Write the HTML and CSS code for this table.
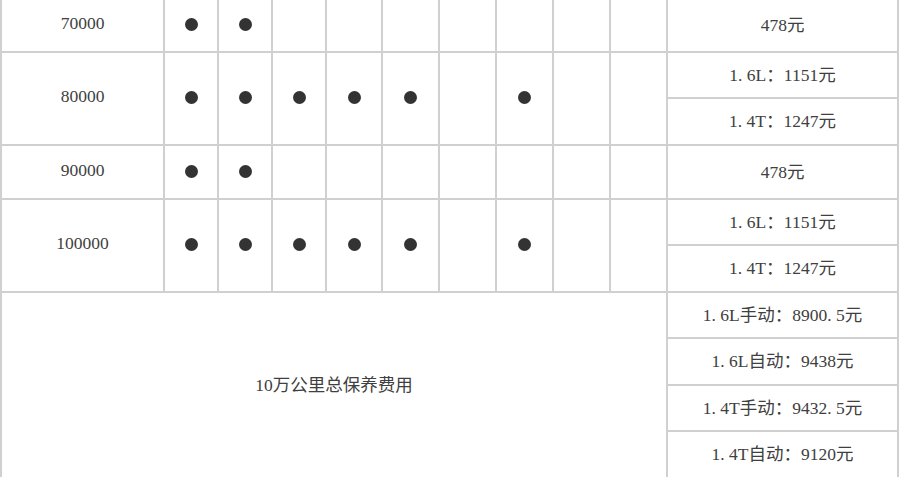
FILE: index.html
```html
<!DOCTYPE html>
<html lang="zh-CN">
<head>
<meta charset="utf-8">
<title>保养费用</title>
<link rel="stylesheet" href="styles.css">
</head>
<body>
<div class="sheet">
  <!-- 70000 -->
  <div class="cell"><span class="txt">70000</span></div>
  <div class="cell"><span class="dot"></span></div>
  <div class="cell"><span class="dot"></span></div>
  <div class="cell"></div>
  <div class="cell"></div>
  <div class="cell"></div>
  <div class="cell"></div>
  <div class="cell"></div>
  <div class="cell"></div>
  <div class="cell"></div>
  <div class="cell"><span class="txt">478元</span></div>

  <!-- 80000 -->
  <div class="cell span2"><span class="txt">80000</span></div>
  <div class="cell span2"><span class="dot"></span></div>
  <div class="cell span2"><span class="dot"></span></div>
  <div class="cell span2"><span class="dot"></span></div>
  <div class="cell span2"><span class="dot"></span></div>
  <div class="cell span2"><span class="dot"></span></div>
  <div class="cell span2"></div>
  <div class="cell span2"><span class="dot"></span></div>
  <div class="cell span2"></div>
  <div class="cell span2"></div>
  <div class="cell"><span class="txt">1<span class="pt">.</span>6L：1151元</span></div>
  <div class="cell"><span class="txt">1<span class="pt">.</span>4T：1247元</span></div>

  <!-- 90000 -->
  <div class="cell"><span class="txt">90000</span></div>
  <div class="cell"><span class="dot"></span></div>
  <div class="cell"><span class="dot"></span></div>
  <div class="cell"></div>
  <div class="cell"></div>
  <div class="cell"></div>
  <div class="cell"></div>
  <div class="cell"></div>
  <div class="cell"></div>
  <div class="cell"></div>
  <div class="cell"><span class="txt">478元</span></div>

  <!-- 100000 -->
  <div class="cell span2"><span class="txt">100000</span></div>
  <div class="cell span2"><span class="dot"></span></div>
  <div class="cell span2"><span class="dot"></span></div>
  <div class="cell span2"><span class="dot"></span></div>
  <div class="cell span2"><span class="dot"></span></div>
  <div class="cell span2"><span class="dot"></span></div>
  <div class="cell span2"></div>
  <div class="cell span2"><span class="dot"></span></div>
  <div class="cell span2"></div>
  <div class="cell span2"></div>
  <div class="cell"><span class="txt">1<span class="pt">.</span>6L：1151元</span></div>
  <div class="cell"><span class="txt">1<span class="pt">.</span>4T：1247元</span></div>

  <!-- total -->
  <div class="cell total"><span class="txt">10万公里总保养费用</span></div>
  <div class="cell"><span class="txt">1<span class="pt">.</span>6L手动：8900<span class="pt">.</span>5元</span></div>
  <div class="cell"><span class="txt">1<span class="pt">.</span>6L自动：9438元</span></div>
  <div class="cell"><span class="txt">1<span class="pt">.</span>4T手动：9432<span class="pt">.</span>5元</span></div>
  <div class="cell"><span class="txt">1<span class="pt">.</span>4T自动：9120元</span></div>
</div>
</body>
</html>
```

FILE: styles.css
```css
html, body {
  margin: 0;
  padding: 0;
  background: #ffffff;
}

body {
  overflow: hidden;
}

.sheet {
  display: grid;
  grid-template-columns: 161px 52px 52px 52px 54px 55px 55px 55px 55px 55px 229px;
  grid-template-rows: 51px 44px 45px 52px 44px 45px 44px 45px 44px 45px;
  gap: 2px;
  padding: 0 2px 2px 2px;
  width: max-content;
  background: #d0d0d0;
  font-family: "Liberation Serif", "Noto Sans CJK SC", serif;
  font-size: 17.5px;
  color: #404040;
}

.cell {
  background: #ffffff;
  display: flex;
  align-items: center;
  justify-content: center;
  white-space: nowrap;
  padding-bottom: 4px;
  box-sizing: border-box;
}

.txt {
  display: block;
}

.pt {
  padding-right: 0.25em;
}

.span2 {
  grid-row: span 2;
}

.total {
  grid-column: span 10;
  grid-row: span 4;
}

.dot {
  display: block;
  width: 13px;
  height: 13px;
  border-radius: 50%;
  background: #333333;
  margin-top: 2px;
}
```
